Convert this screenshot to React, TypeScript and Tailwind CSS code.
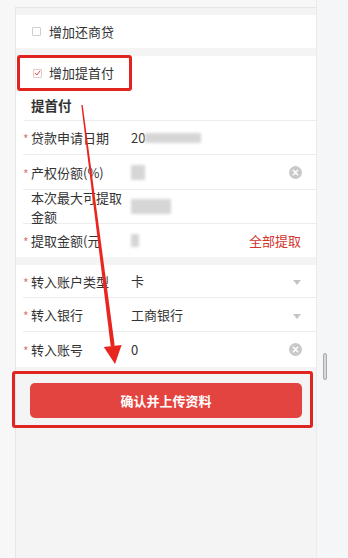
import React from "react";

const font = { fontFamily: '"Noto Sans CJK SC", "Noto Sans", sans-serif' };

const ClearIcon = () => (
  <svg width="13" height="13" viewBox="0 0 13 13">
    <circle cx="6.5" cy="6.5" r="6.5" fill="#c9c9c9" />
    <path d="M4.3 4.3 L8.7 8.7 M8.7 4.3 L4.3 8.7" stroke="#fff" strokeWidth="1.5" strokeLinecap="round" />
  </svg>
);

const Caret = () => (
  <svg width="8" height="5" viewBox="0 0 8 5">
    <path d="M0 0 L8 0 L4 5 Z" fill="#c4c4c4" />
  </svg>
);

const Blur = ({ w, h }: { w: number; h: number }) => (
  <span className="inline-block bg-[#d6d6d6] blur-[1.5px]" style={{ width: w, height: h }} />
);

interface RowProps {
  label: React.ReactNode;
  required?: boolean;
  children?: React.ReactNode;
  right?: React.ReactNode;
  h?: string;
  last?: boolean;
}

const Row = ({ label, required = true, children, right, h = "h-[34px]", last }: RowProps) => (
  <div className={`ml-[7px] flex items-center pr-[14px] ${h} ${last ? "" : "border-b border-[#ececec]"}`}>
    <span className="w-[8px] pt-[3px] text-[12px] leading-none text-[#d77a75]">{required ? "*" : ""}</span>
    <div className="w-[100px] text-[13px] leading-[19px] text-[#333]">{label}</div>
    <div className="flex flex-1 items-center text-[13px] text-[#333]">{children}</div>
    {right}
  </div>
);

export default function App() {
  return (
    <div className="relative flex h-[558px] w-[348px] overflow-hidden bg-[#f7f7f7]" style={font}>
      <div className="w-[15px] shrink-0" />
      <div className="mt-[7px] flex w-[301px] shrink-0 flex-col border-l border-t border-[#e6e6e6] bg-[#f4f4f4] pt-[7px]">
        {/* 还商贷 */}
        <div className="flex h-[33px] items-center bg-white pl-[16px]">
          <span className="h-[9px] w-[9px] rounded-[1px] border border-[#cfcfcf] bg-white" />
          <span className="ml-[8px] text-[13px] text-[#333]">增加还商贷</span>
        </div>

        {/* 提首付 */}
        <div className="mt-[8px] bg-white">
          <div className="flex h-[34px] items-center pl-[17px]">
            <span className="flex h-[9px] w-[9px] items-center justify-center rounded-[1px] border border-[#e8c8c8] bg-white">
              <svg width="7" height="6" viewBox="0 0 7 6">
                <path d="M0.8 3 L2.8 5 L6.2 0.8" stroke="#d9413c" strokeWidth="1" fill="none" />
              </svg>
            </span>
            <span className="ml-[7px] text-[13px] text-[#333]">增加提首付</span>
          </div>
          <div className="ml-[8px] flex h-[31px] items-center border-b border-[#ececec] pl-[7px] text-[13.5px] font-bold text-[#333]">
            提首付
          </div>
          <Row label="贷款申请日期">
            <span>20</span>
            <Blur w={56} h={10} />
          </Row>
          <Row label="产权份额(%)" h="h-[35px]" right={<ClearIcon />}>
            <Blur w={14} h={15} />
          </Row>
          <Row label={<>本次最大可提取<br />金额</>} required={false}>
            <Blur w={40} h={15} />
          </Row>
          <Row label="提取金额(元" h="h-[33px]" last right={<span className="mr-[1px] text-[13px] text-[#d2342e]">全部提取</span>}>
            <Blur w={8} h={13} />
          </Row>
        </div>

        {/* 转入 */}
        <div className="mt-[8px] bg-white">
          <Row label="转入账户类型" h="h-[33px]" right={<span className="mr-[1px] mt-[3px]"><Caret /></span>}>
            <span>卡</span>
          </Row>
          <Row label="转入银行" right={<span className="mr-[1px] mt-[3px]"><Caret /></span>}>
            <span>工商银行</span>
          </Row>
          <Row label="转入账号" h="h-[35px]" last right={<ClearIcon />}>
            <span>0</span>
          </Row>
        </div>

        <div className="mt-[16px] px-[14px]">
          <button className="flex h-[35px] w-full items-center justify-center rounded-[5px] bg-[#e4443f] text-[13px] font-bold text-white">
            确认并上传资料
          </button>
        </div>
      </div>

      {/* right gutter with scrollbar */}
      <div className="relative flex-1 border-l border-[#ebebeb] bg-[#f5f6f7]">
        <div className="absolute left-[6px] top-[353px] h-[27px] w-[4px] rounded-[2px] border border-[#aaa] bg-[#d8d8d8]" />
      </div>

      {/* annotations */}
      <div className="pointer-events-none absolute left-[17px] top-[55px] h-[36px] w-[115px] rounded-[3px] border-[3px] border-[#e0241f]" />
      <div className="pointer-events-none absolute left-[12px] top-[371px] h-[57px] w-[301px] rounded-[3px] border-[3px] border-[#e0241f]" />
      <svg className="pointer-events-none absolute left-0 top-0" width="348" height="558" viewBox="0 0 348 558">
        <polygon points="81.3,105.1 82.7,104.9 114.7,345.8 110.7,346.3" fill="#e8251f" />
        <polygon points="115,364 103.8,347.1 121.6,344.9" fill="#e8251f" />
      </svg>
    </div>
  );
}
